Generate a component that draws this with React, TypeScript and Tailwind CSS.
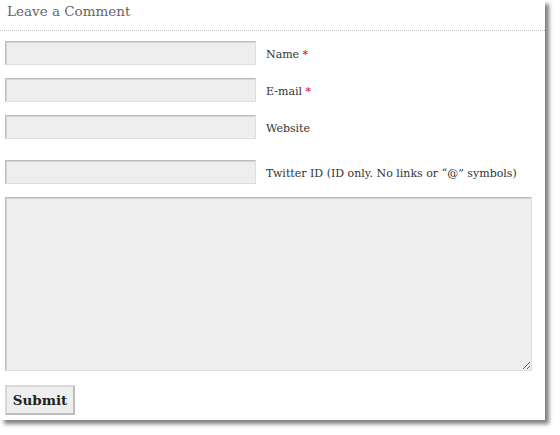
import { memo } from "react";

const serif = "font-['DejaVu_Serif',Georgia,serif]";

const fieldClass =
  "h-[24px] w-[251px] bg-[#eeeeee] border border-t-[#bdbdbd] border-l-[#bdbdbd] border-r-[#dedede] border-b-[#dedede] shadow-[inset_1px_1px_0_#d4d4d4] outline-none";

type RowProps = { label: string; required?: boolean; className?: string };

const Row = ({ label, required, className = "" }: RowProps) => (
  <div className={`flex flex-row items-center gap-[10px] ${className}`}>
    <input type="text" className={fieldClass} />
    <label className="pt-[3px] text-[11px] leading-[14px] text-[#333]">
      {label}
      {required && <span className="text-[#e00000]"> *</span>}
    </label>
  </div>
);

const App = memo(() => {
  return (
    <div className="w-[560px] h-[435px] bg-white">
      <div
        className={`w-[545px] h-[420px] bg-white shadow-[4px_4px_4px_rgba(0,0,0,0.5)] flex flex-col ${serif}`}
      >
        <h3 className="h-[31px] pl-[7px] pt-[1px] text-[13.5px] leading-[20px] text-[#666] border-b border-dotted border-[#bcbcbc]">
          Leave a Comment
        </h3>
        <form className="flex flex-col items-start pl-[5px] pt-[10px]">
          <Row label="Name" required />
          <Row label="E-mail" required className="mt-[13px]" />
          <Row label="Website" className="mt-[13px]" />
          <Row
            label="Twitter ID (ID only. No links or “@” symbols)"
            className="mt-[21px]"
          />
          <textarea
            className="mt-[13px] h-[174px] w-[527px] bg-[#eeeeee] border border-t-[#bdbdbd] border-l-[#bdbdbd] border-r-[#dedede] border-b-[#dedede] shadow-[inset_1px_1px_0_#d4d4d4] outline-none resize"
          />
          <button
            type="button"
            className="mt-[14px] h-[30px] w-[70px] bg-[#eeeeee] border-2 border-t-[#d8d8d8] border-l-[#d8d8d8] border-r-[#bdbdbd] border-b-[#bdbdbd] text-[13.5px] font-bold text-[#222] text-center"
          >
            Submit
          </button>
        </form>
      </div>
    </div>
  );
});

export default App;
